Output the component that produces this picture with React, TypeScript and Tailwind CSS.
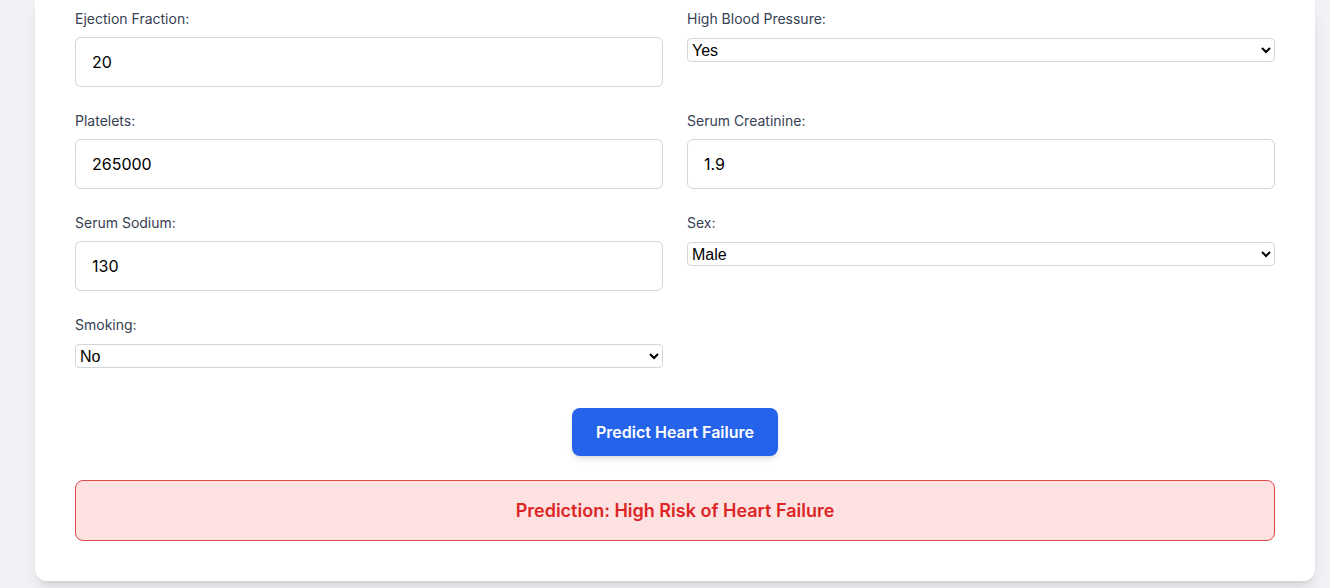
import React from 'react'

const fields = [
  { label: 'Ejection Fraction:', type: 'input', value: '20' },
  { label: 'High Blood Pressure:', type: 'select', value: 'Yes', options: ['Yes', 'No'] },
  { label: 'Platelets:', type: 'input', value: '265000' },
  { label: 'Serum Creatinine:', type: 'input', value: '1.9' },
  { label: 'Serum Sodium:', type: 'input', value: '130' },
  { label: 'Sex:', type: 'select', value: 'Male', options: ['Male', 'Female'] },
  { label: 'Smoking:', type: 'select', value: 'No', options: ['Yes', 'No'] },
]

export default function App() {
  return (
    <div className="min-h-[588px] bg-[#f0f2f5] pb-[7px] pl-[35px] pr-[15px]" style={{ fontFamily: 'Inter, "Noto Sans", sans-serif' }}>
      <div className="rounded-b-xl bg-white px-10 pb-10 pt-[9px] shadow-lg">
        <div className="grid grid-cols-2 gap-x-6 gap-y-6">
          {fields.map((f, i) => (
            <div key={i} className="flex flex-col">
              <label className="mb-2 text-sm leading-5 text-gray-700">{f.label}</label>
              {f.type === 'input' ? (
                <input
                  type="text"
                  defaultValue={f.value}
                  className="h-[50px] w-full rounded-md border border-gray-300 px-4 text-base text-black outline-none"
                />
              ) : (
                <select
                  defaultValue={f.value}
                  className="mt-px h-6 w-full rounded border border-gray-300 text-base text-black"
                  style={{ fontFamily: '"Liberation Sans", Arial, sans-serif' }}
                >
                  {f.options!.map((o) => (
                    <option key={o}>{o}</option>
                  ))}
                </select>
              )}
            </div>
          ))}
        </div>

        <div className="mt-10 flex justify-center">
          <button className="h-12 rounded-lg bg-[#2563eb] px-6 text-base font-semibold text-white shadow-md">
            Predict Heart Failure
          </button>
        </div>

        <div className="mt-6 flex h-[61px] items-center justify-center rounded-lg border border-[#dc4a4a] bg-[#fee2e2] text-lg font-semibold leading-7 text-[#dc2626]">
          Prediction: High Risk of Heart Failure
        </div>
      </div>
    </div>
  )
}
